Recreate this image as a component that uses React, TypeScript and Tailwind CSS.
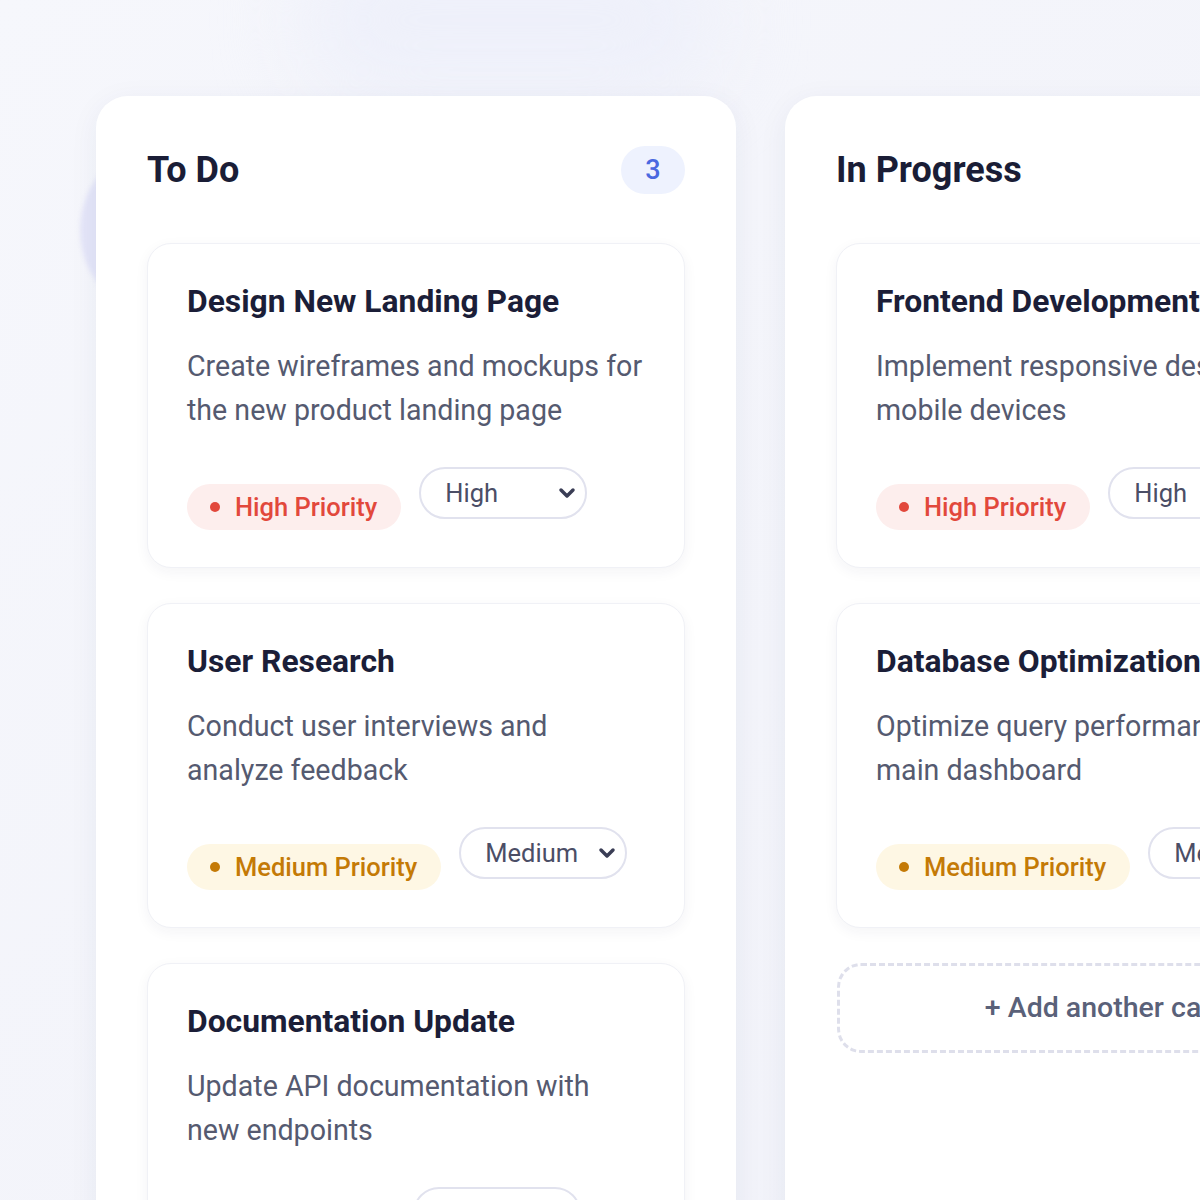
import { ChevronDown } from "lucide-react";

type Priority = "high" | "medium" | "low";

type Task = {
    title: string;
    description: string;
    priority: Priority;
};

type Column = {
    name: string;
    tasks: Task[];
    addCard?: boolean;
};

const priorityStyles: Record<Priority, { pill: string; dot: string; label: string; select: string }> = {
    high: { pill: "bg-[#fdeeed] text-[#e2483c]", dot: "bg-[#e2483c]", label: "High Priority", select: "High" },
    medium: { pill: "bg-[#fef7e4] text-[#c47a06]", dot: "bg-[#c47a06]", label: "Medium Priority", select: "Medium" },
    low: { pill: "bg-[#e9f8ef] text-[#1f9d55]", dot: "bg-[#1f9d55]", label: "Low Priority", select: "Low" },
};

const columns: Column[] = [
    {
        name: "To Do",
        tasks: [
            { title: "Design New Landing Page", description: "Create wireframes and mockups for the new product landing page", priority: "high" },
            { title: "User Research", description: "Conduct user interviews and analyze feedback", priority: "medium" },
            { title: "Documentation Update", description: "Update API documentation with new endpoints", priority: "low" },
        ],
    },
    {
        name: "In Progress",
        addCard: true,
        tasks: [
            { title: "Frontend Development", description: "Implement responsive design for mobile devices", priority: "high" },
            { title: "Database Optimization", description: "Optimize query performance for main dashboard", priority: "medium" },
        ],
    },
];

function TaskCard({ task }: { task: Task }) {
    const p = priorityStyles[task.priority];
    return (
        <div className="w-[538px] shrink-0 bg-white rounded-[24px] border border-[#f0f1f6] shadow-[0_4px_14px_rgba(30,35,80,0.05)] pl-[39px] pr-[39px] pt-[39px] pb-[37px]">
            <h3 className="text-[31.8px] leading-[36px] font-bold text-[#1b1e38] whitespace-nowrap">{task.title}</h3>
            <p className="mt-[25px] text-[28.6px] leading-[44px] text-[#555a70]">{task.description}</p>
            <div className="mt-[35px] flex items-start gap-[18px]">
                <span className={`mt-[17px] h-[46px] inline-flex items-center gap-[15px] pl-[23px] pr-[24px] rounded-full text-[25.5px] font-medium whitespace-nowrap ${p.pill}`}>
                    <span className={`w-[10px] h-[10px] rounded-full ${p.dot}`} />
                    {p.label}
                </span>
                <div className="w-[168px] h-[52px] shrink-0 flex items-center justify-between pl-[24px] pr-[6px] rounded-full border-2 border-[#e1e2ee] bg-white text-[25.5px] text-[#4b4e66]">
                    <span>{p.select}</span>
                    <ChevronDown size={24} strokeWidth={3.5} className="text-[#3a3d55]" />
                </div>
            </div>
        </div>
    );
}

function BoardColumn({ column }: { column: Column }) {
    return (
        <div className="w-[640px] shrink-0 bg-white rounded-[32px] shadow-[0_6px_30px_rgba(40,45,110,0.06)] px-[51px] pt-[50px] pb-[60px]">
            {/* Header */}
            <div className="flex items-center justify-between h-[48px]">
                <h2 className="text-[36px] font-bold text-[#1a1d36] whitespace-nowrap">{column.name}</h2>
                <span className="w-[64px] h-[48px] shrink-0 rounded-full bg-[#eef2fe] text-[#4a68e0] text-[27px] font-medium flex items-center justify-center">
                    {column.tasks.length}
                </span>
            </div>

            <div className="mt-[49px] flex flex-col gap-[35px]">
                {column.tasks.map((t) => (
                    <TaskCard key={t.title} task={t} />
                ))}
                {column.addCard && (
                    <div className="w-[538px] h-[90px] ml-[1px] rounded-[24px] border-[3px] border-dashed border-[#dedfeb] flex items-center justify-center text-[28.5px] font-medium text-[#5a6179] whitespace-nowrap">
                        + Add another card
                    </div>
                )}
            </div>
        </div>
    );
}

export default function App() {
    return (
        <div
            className="relative w-[1200px] h-[1200px] overflow-hidden bg-gradient-to-br from-[#f6f7fc] to-[#f1f2f9]"
            style={{ fontFamily: "Roboto, 'Noto Sans', sans-serif" }}
        >
            {/* Decorative blob */}
            <div className="absolute left-[80px] top-[140px] w-[180px] h-[180px] rounded-full bg-[#e4e5f8] blur-[2px]" />
            <div className="absolute left-[300px] top-[-60px] w-[420px] h-[160px] rounded-full bg-[#eef0fa] blur-2xl" />

            <div className="relative flex gap-[49px] pl-[96px] pt-[96px]">
                {columns.map((c) => (
                    <BoardColumn key={c.name} column={c} />
                ))}
            </div>
        </div>
    );
}
